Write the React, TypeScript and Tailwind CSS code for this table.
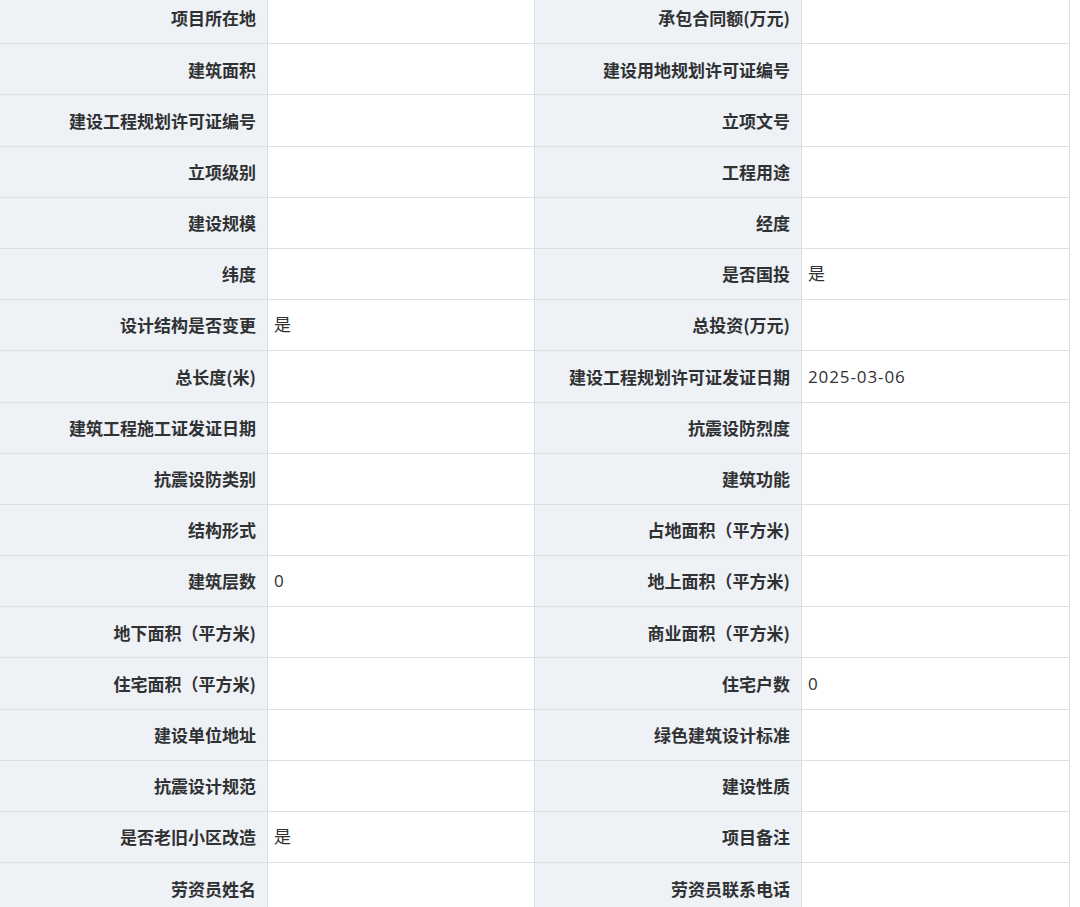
const rows: [string, string, string, string][] = [
  ["项目所在地", "", "承包合同额(万元)", ""],
  ["建筑面积", "", "建设用地规划许可证编号", ""],
  ["建设工程规划许可证编号", "", "立项文号", ""],
  ["立项级别", "", "工程用途", ""],
  ["建设规模", "", "经度", ""],
  ["纬度", "", "是否国投", "是"],
  ["设计结构是否变更", "是", "总投资(万元)", ""],
  ["总长度(米)", "", "建设工程规划许可证发证日期", "2025-03-06"],
  ["建筑工程施工证发证日期", "", "抗震设防烈度", ""],
  ["抗震设防类别", "", "建筑功能", ""],
  ["结构形式", "", "占地面积（平方米)", ""],
  ["建筑层数", "0", "地上面积（平方米)", ""],
  ["地下面积（平方米)", "", "商业面积（平方米)", ""],
  ["住宅面积（平方米)", "", "住宅户数", "0"],
  ["建设单位地址", "", "绿色建筑设计标准", ""],
  ["抗震设计规范", "", "建设性质", ""],
  ["是否老旧小区改造", "是", "项目备注", ""],
  ["劳资员姓名", "", "劳资员联系电话", ""],
];

function Label({ text }: { text: string }) {
  return (
    <div className="flex h-[51.2px] items-center justify-end whitespace-nowrap border-b border-r border-[#dcdfe6] bg-[#eef1f6] pr-[11px] font-bold text-[#303133]">
      {text}
    </div>
  );
}

function Value({ text }: { text: string }) {
  return (
    <div className="flex h-[51.2px] items-center whitespace-nowrap border-b border-r border-[#dcdfe6] bg-white pl-[6px] font-['Open_Sans','Noto_Sans_CJK_SC',sans-serif] tracking-[0.9px] text-[#303133]">
      {text}
    </div>
  );
}

export default function App() {
  return (
    <div className="h-[907px] w-[1080px] overflow-hidden bg-white font-['Noto_Sans_CJK_SC','Noto_Sans',sans-serif] text-[17px]">
      <div className="-mt-[7px] grid w-[1070px] grid-cols-[268px_267px_267px_268px]">
        {rows.map(([l1, v1, l2, v2], i) => (
          <div key={i} className="contents">
            <Label text={l1} />
            <Value text={v1} />
            <Label text={l2} />
            <Value text={v2} />
          </div>
        ))}
      </div>
    </div>
  );
}
